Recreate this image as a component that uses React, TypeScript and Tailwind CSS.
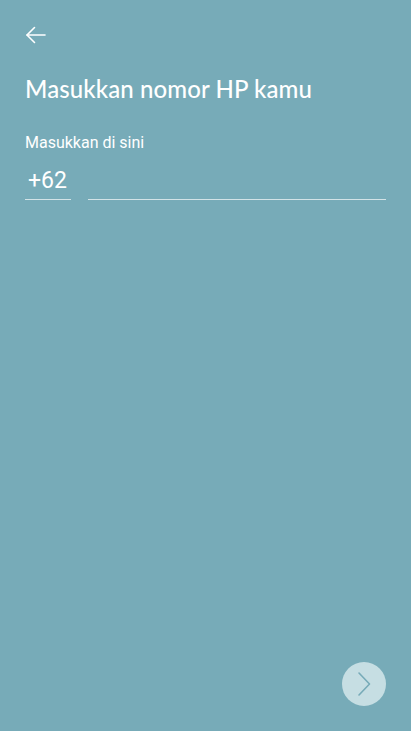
import React, { useState } from 'react';

export default function App() {
  const [phone, setPhone] = useState('');

  return (
    <div className="relative h-[731px] w-full bg-[#77abb8] text-white" style={{ fontFamily: 'Roboto, sans-serif' }}>
      <div className="px-[25px] pt-[25px]">
        <button type="button" className="flex h-[20px] w-[22px] items-center justify-start">
          <svg width="22" height="20" viewBox="0 0 22 20" fill="none" stroke="white" strokeWidth="1.6" strokeLinecap="round" strokeLinejoin="round">
            <path d="M20 10H2" />
            <path d="M9.5 2.5L2 10l7.5 7.5" />
          </svg>
        </button>

        <h1 className="mt-[27px] text-[24px] font-medium leading-[34px] tracking-[0.1px]" style={{ fontFamily: 'Lato, sans-serif' }}>
          Masukkan nomor HP kamu
        </h1>

        <label htmlFor="phone" className="mt-[27px] block text-[16px] leading-[20px] text-white">
          Masukkan di sini
        </label>

        <div className="mt-[14px] flex items-end gap-[17px]">
          <div className="w-[46px] border-b border-[#d3e3e7] pb-[4px] pl-[3px] text-[23px] leading-[28px]">+62</div>
          <input
            id="phone"
            type="tel"
            value={phone}
            onChange={(e) => setPhone(e.target.value)}
            className="h-[33px] flex-1 border-b border-[#d3e3e7] bg-transparent text-[23px] text-white outline-none"
          />
        </div>
      </div>

      <button
        type="button"
        className="absolute left-[342px] top-[662px] flex h-[44px] w-[44px] items-center justify-center rounded-full bg-[#c6dee3]"
      >
        <svg width="14" height="26" viewBox="0 0 14 26" fill="none" stroke="#77abb8" strokeWidth="1.6" strokeLinecap="round" strokeLinejoin="round">
          <path d="M2 2l10.5 11L2 24" />
        </svg>
      </button>
    </div>
  );
}
